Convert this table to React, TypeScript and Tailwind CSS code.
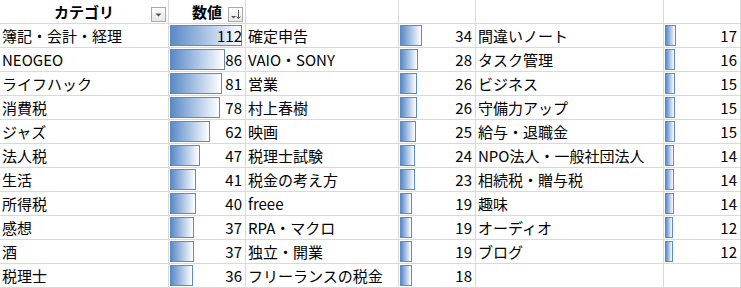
import React from "react";

type Row = [string, number] | null;

const colA: Row[] = [
  ["簿記・会計・経理", 112],
  ["NEOGEO", 86],
  ["ライフハック", 81],
  ["消費税", 78],
  ["ジャズ", 62],
  ["法人税", 47],
  ["生活", 41],
  ["所得税", 40],
  ["感想", 37],
  ["酒", 37],
  ["税理士", 36],
];
const colC: Row[] = [
  ["確定申告", 34],
  ["VAIO・SONY", 28],
  ["営業", 26],
  ["村上春樹", 26],
  ["映画", 25],
  ["税理士試験", 24],
  ["税金の考え方", 23],
  ["freee", 19],
  ["RPA・マクロ", 19],
  ["独立・開業", 19],
  ["フリーランスの税金", 18],
];
const colE: Row[] = [
  ["間違いノート", 17],
  ["タスク管理", 16],
  ["ビジネス", 15],
  ["守備力アップ", 15],
  ["給与・退職金", 15],
  ["NPO法人・一般社団法人", 14],
  ["相続税・贈与税", 14],
  ["趣味", 14],
  ["オーディオ", 12],
  ["ブログ", 12],
  null,
];

const font = {
  fontFamily: '"Noto Sans CJK JP", "Noto Sans", sans-serif',
};

function FilterButton({ sort }: { sort?: boolean }) {
  return (
    <div className="absolute right-[2px] bottom-[1px] w-[15px] h-[15px] border border-[#a9a9a9] bg-gradient-to-b from-white to-[#e8e8e8] flex items-center justify-center">
      {sort ? (
        <svg width="13" height="13" viewBox="0 0 13 13">
          <polygon points="2,8 7,8 4.5,10.5" fill="#555" />
          <line x1="9.5" y1="2" x2="9.5" y2="10.5" stroke="#555" strokeWidth="1" />
          <polyline points="7.5,8.5 9.5,10.5 11.5,8.5" fill="none" stroke="#555" strokeWidth="1" />
        </svg>
      ) : (
        <svg width="13" height="13" viewBox="0 0 13 13">
          <polygon points="3.5,5.5 9.5,5.5 6.5,8.5" fill="#555" />
        </svg>
      )}
    </div>
  );
}

function LabelCell({ text }: { text?: string }) {
  return (
    <div className="h-[24px] border-r border-b border-[#d9d9d9] pl-[2px] flex items-center text-[15px] text-black whitespace-nowrap overflow-hidden leading-none">
      {text}
    </div>
  );
}

function BarCell({ value }: { value?: number }) {
  if (value === undefined)
    return <div className="h-[24px] border-r border-b border-[#d9d9d9]" />;
  const w = Math.round((value * 72) / 112);
  return (
    <div className="relative h-[24px] border-r border-b border-[#d9d9d9] flex items-center justify-end pr-[3px] text-[15px] text-black leading-none">
      <div
        className="absolute left-[1px] top-[1px] h-[21px] border border-[#5b8bc6] bg-gradient-to-r from-[#5a8ac6] to-white"
        style={{ width: w }}
      />
      <span className="relative">{value}</span>
    </div>
  );
}

export default function App() {
  const rows = Array.from({ length: 11 }, (_, i) => i);
  return (
    <div className="w-[741px] h-[288px] bg-white overflow-hidden" style={font}>
      <div className="grid grid-cols-[169px_77px_153px_77px_188px_77px]">
        <div className="relative h-[24px] border-r border-b border-[#d9d9d9] flex items-center justify-center font-bold text-[15px] text-black leading-none">
          カテゴリ
          <FilterButton />
        </div>
        <div className="relative h-[24px] border-r border-b border-[#d9d9d9] flex items-center justify-center font-bold text-[15px] text-black leading-none">
          数値
          <FilterButton sort />
        </div>
        <div className="h-[24px] border-r border-b border-[#d9d9d9]" />
        <div className="h-[24px] border-r border-b border-[#d9d9d9]" />
        <div className="h-[24px] border-r border-b border-[#d9d9d9]" />
        <div className="h-[24px] border-r border-b border-[#d9d9d9]" />
        {rows.map((i) => (
          <React.Fragment key={i}>
            <LabelCell text={colA[i]?.[0]} />
            <BarCell value={colA[i]?.[1]} />
            <LabelCell text={colC[i]?.[0]} />
            <BarCell value={colC[i]?.[1]} />
            <LabelCell text={colE[i]?.[0]} />
            <BarCell value={colE[i]?.[1]} />
          </React.Fragment>
        ))}
      </div>
    </div>
  );
}
